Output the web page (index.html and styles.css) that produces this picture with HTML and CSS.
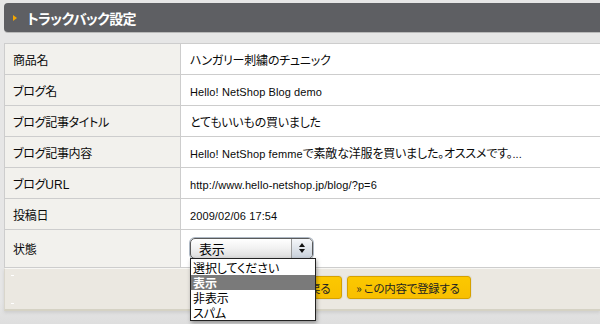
FILE: index.html
```html
<!DOCTYPE html>
<html lang="ja">
<head>
<meta charset="utf-8">
<link rel="stylesheet" href="styles.css">
</head>
<body>
<div class="page">
  <div class="head"><span class="tri"></span><h1>トラックバック設定</h1></div>
  <table class="form">
    <tr><th>商品名</th><td>ハンガリー刺繍のチュニック</td></tr>
    <tr><th>ブログ名</th><td><span class="en">Hello! NetShop Blog demo</span></td></tr>
    <tr><th>ブログ記事タイトル</th><td>とてもいいもの買いました</td></tr>
    <tr><th>ブログ記事内容</th><td><span class="en">Hello! NetShop femme</span>で素敵な洋服を買いました。オススメです。<span class="en">...</span></td></tr>
    <tr><th>ブログ<span class="en lab">URL</span></th><td><span class="en">http://www.hello-netshop.jp/blog/?p=6</span></td></tr>
    <tr><th>投稿日</th><td><span class="en">2009/02/06 17:54</span></td></tr>
    <tr class="tall"><th>状態</th><td>
      <div class="sel"><span class="sel-val">表示</span><span class="sel-arrows"><i class="up"></i><i class="down"></i></span></div>
    </td></tr>
  </table>
  <div class="foot">
    <span class="mark m1"></span><span class="mark m2"></span>
    <div class="btns">
      <span class="btn">» 検索画面に戻る</span>
      <span class="btn">» この内容で登録する</span>
    </div>
  </div>
  <ul class="popup">
    <li>選択してください</li>
    <li class="on">表示</li>
    <li>非表示</li>
    <li>スパム</li>
  </ul>
</div>
</body>
</html>
```
FILE: styles.css
```css
html, body {
  margin: 0;
  padding: 0;
  overflow: hidden;
}
body {
  width: 600px;
  height: 324px;
  background: #e4e4e4;
  font-family: "Noto Sans CJK JP", sans-serif;
  color: #0a0a0a;
  font-feature-settings: "palt";
}
.page {
  position: relative;
  padding: 3px 0 0 4px;
  height: 321px;
  background: linear-gradient(#e6e6e6 0, #e6e6e6 300px, #dedede 324px);
}
.head {
  height: 29px;
  background: #5e5f63;
  border-radius: 4px 0 0 4px;
  display: flex;
  align-items: center;
  box-shadow: 0 1px 0 #b9b9b9;
}
.tri {
  width: 0;
  height: 0;
  border-left: 4px solid #f4a600;
  border-top: 3px solid transparent;
  border-bottom: 3px solid transparent;
  margin: 0 0 0 9px;
}
.head h1 {
  margin: 0 0 0 10px;
  font-size: 14px;
  font-weight: bold;
  color: #fff;
  letter-spacing: -0.6px;
}
.form {
  margin-top: 11px;
  border-collapse: collapse;
  width: 600px;
  font-size: 12px;
}
.form th, .form td {
  border: 1px solid #cdcdcd;
  border-right: none;
  height: 30px;
  padding: 0;
  text-align: left;
}
.form th {
  width: 167px;
  padding-left: 8px;
  background: #f2f1ed;
  font-weight: normal;
  font-size: 12px;
  letter-spacing: -0.3px;
}
.form td {
  background: #fff;
  padding-left: 9px;
  font-size: 12px;
  letter-spacing: -0.2px;
}
.en {
  font-family: "Liberation Sans", sans-serif;
  font-size: 11px;
  letter-spacing: 0.1px;
}
.en.lab {
  font-size: 12px;
}
.form tr.tall th, .form tr.tall td {
  height: 37px;
}
.sel {
  width: 121px;
  height: 19px;
  border: 1px solid #5a5a5a;
  border-radius: 5px;
  box-shadow: 0 0 0 1px #aeb8c4;
  background: linear-gradient(#ffffff, #f1f1f1 50%, #dcdcdc);
  display: flex;
  align-items: center;
  justify-content: space-between;
  margin-top: -1px;
}
.sel-val {
  font-size: 13px;
  padding-left: 8px;
  color: #000;
}
.sel-arrows {
  width: 20px;
  height: 19px;
  border-left: 1px solid #999;
  border-radius: 0 4px 4px 0;
  background: linear-gradient(#f5f7fa, #c9d1db);
  display: flex;
  flex-direction: column;
  align-items: center;
  justify-content: center;
  gap: 2px;
}
.sel-arrows i {
  display: block;
  width: 0;
  height: 0;
  border-left: 3px solid transparent;
  border-right: 3px solid transparent;
}
.sel-arrows .up { border-bottom: 4px solid #111; }
.sel-arrows .down { border-top: 4px solid #111; }
.foot {
  position: relative;
  height: 40px;
  background: #ebe8e1;
  border-top: 1px solid #f8f7f4;
  border-left: 1px solid #d9d6cc;
  border-bottom: 2px solid #d5d2c4;
  box-shadow: 0 2px 3px #cfcfcf;
}
.mark {
  position: absolute;
  left: 6px;
  width: 3px;
  height: 1px;
  background: #fff;
}
.m1 { top: 6px; }
.m2 { top: 34px; }
.btns {
  display: flex;
  gap: 5px;
  padding: 7px 0 0 232px;
}
.btn {
  display: inline-flex;
  align-items: center;
  height: 21px;
  padding: 0 11px 0 8px;
  background: linear-gradient(#fcc800, #f8bf00);
  border: 1px solid #d6a100;
  border-radius: 3px;
  box-shadow: 0 0 0 1px #e0dfd8;
  font-size: 11.5px;
  letter-spacing: -0.3px;
  color: #222;
}
.popup {
  position: absolute;
  left: 190px;
  top: 258px;
  width: 124px;
  margin: 0;
  padding: 1px 0 0;
  list-style: none;
  background: #fff;
  border: 1px solid #222;
  box-shadow: 1px 2px 4px rgba(0,0,0,0.35);
  font-size: 12px;
  letter-spacing: -0.1px;
}
.popup li {
  height: 15px;
  line-height: 15px;
  padding-left: 2px;
  color: #000;
}
.popup li.on {
  background: #7a7a7a;
  color: #fff;
  font-weight: bold;
}
```
